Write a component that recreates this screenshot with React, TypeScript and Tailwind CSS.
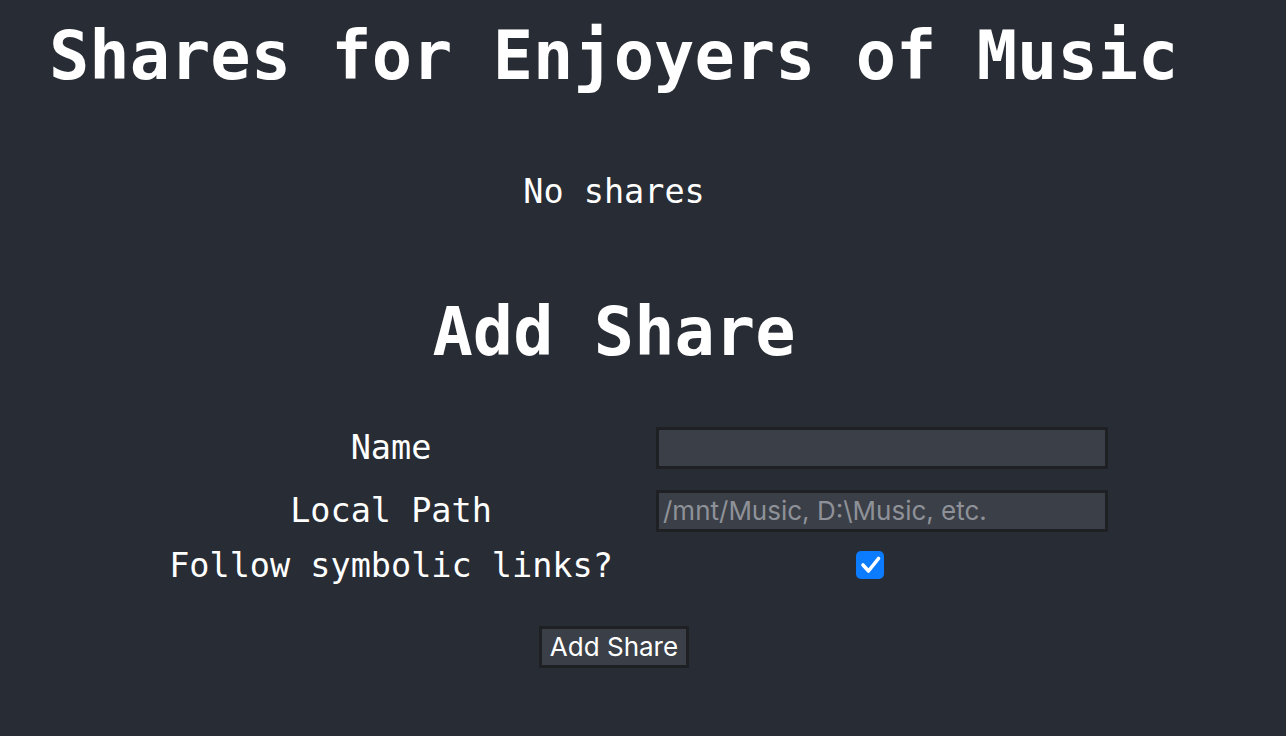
import React from 'react';

const mono = { fontFamily: '"DejaVu Sans Mono", "Liberation Mono", monospace' };
const sans = { fontFamily: 'Inter, "Noto Sans", sans-serif' };

const Checkbox: React.FC = () => (
  <div className="w-[28px] h-[28px] rounded-[5px] bg-[#0b7bff] flex items-center justify-center">
    <svg width="28" height="28" viewBox="0 0 28 28" fill="none">
      <path d="M7 14 L12.5 20 L22.5 7.5" stroke="white" strokeWidth="3.6" strokeLinecap="round" strokeLinejoin="round" />
    </svg>
  </div>
);

export default function App() {
  return (
    <div className="min-h-[736px] w-full bg-[#282c34] text-white overflow-hidden" style={mono}>
      <h1 className="pt-[23px] pl-[49px] text-[67px] leading-none font-bold whitespace-nowrap">
        Shares for Enjoyers of Music
      </h1>

      <div className="w-[1228px] flex flex-col items-center">
        <p className="mt-[85px] text-[33.5px] leading-none">No shares</p>
        <h2 className="mt-[90px] text-[67px] leading-none font-bold">Add Share</h2>
      </div>

      <div className="mt-[61px] ml-[168px] grid grid-cols-[446px_452px] gap-x-[42px] items-center">
        <label className="text-center text-[33.5px] leading-none whitespace-nowrap">Name</label>
        <input
          type="text"
          className="h-[42px] w-[452px] bg-[#3b3f47] border-[3px] border-[#1e2024] outline-none px-[4px] text-[26px]"
          style={sans}
        />

        <label className="mt-[21px] text-center text-[33.5px] leading-none whitespace-nowrap">Local Path</label>
        <input
          type="text"
          placeholder="/mnt/Music, D:\Music, etc."
          className="mt-[21px] h-[42px] w-[452px] bg-[#3b3f47] border-[3px] border-[#1e2024] outline-none px-[4px] text-[26px] placeholder:text-[#8e9198]"
          style={sans}
        />

        <label className="mt-[17px] text-center text-[33.5px] leading-none whitespace-nowrap">Follow symbolic links?</label>
        <div className="mt-[17px] pl-[200px]">
          <Checkbox />
        </div>
      </div>

      <div className="w-[1228px] flex justify-center mt-[44px]">
        <button
          className="w-[150px] h-[42px] bg-[#3b3f47] border-[3px] border-[#1e2024] text-[26px] text-white leading-none"
          style={sans}
        >
          Add Share
        </button>
      </div>
    </div>
  );
}
